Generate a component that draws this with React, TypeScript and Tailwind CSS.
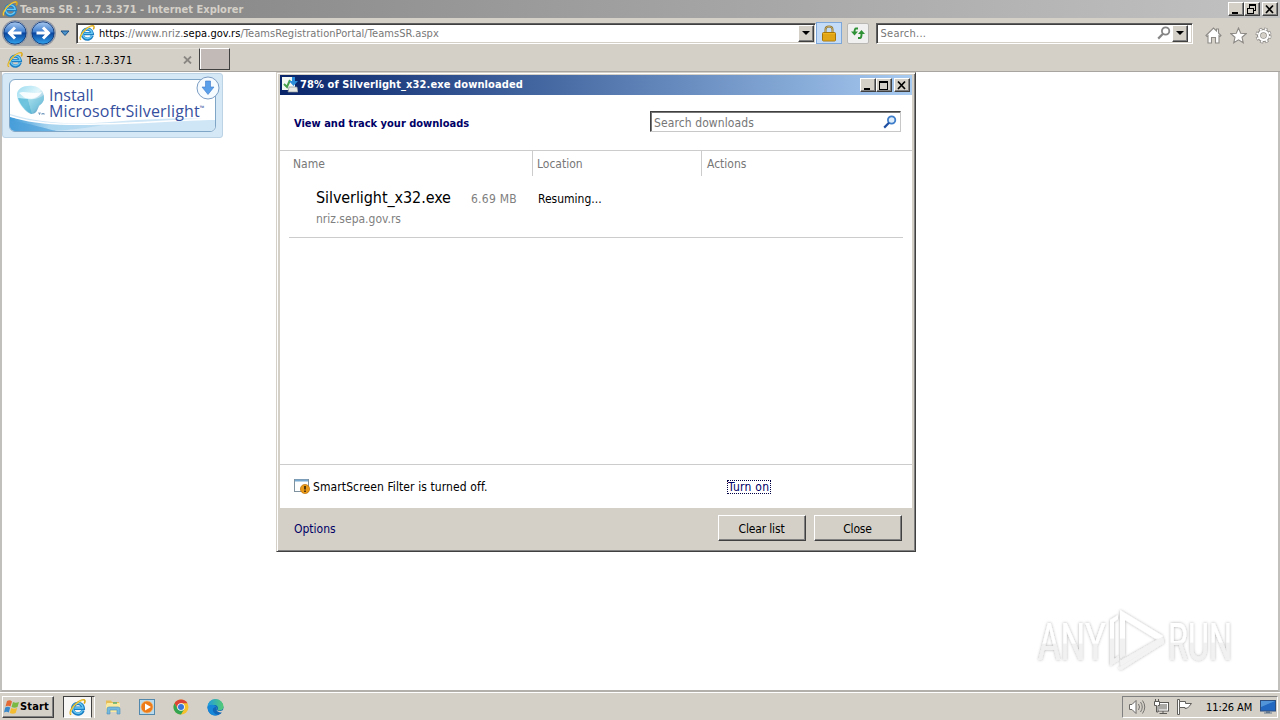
import type { ReactNode } from "react";

const ui = "font-['DejaVu_Sans_Condensed','DejaVu_Sans',sans-serif] whitespace-nowrap";

const raised =
  "bg-[#d4d0c8] border border-t-white border-l-white border-r-[#404040] border-b-[#404040] shadow-[inset_-1px_-1px_0_#808080]";

function IELogo({ size = 16 }: { size?: number }) {
  return (
    <svg width={size} height={size} viewBox="0 0 16 16" fill="none" className="shrink-0">
      <path d="M13.2 10.600A5 5 0 1 1 13.400 8.700H5" stroke="#1c7fc4" strokeWidth="3.200" />
      <path d="M12.800 10.600A4.800 4.800 0 1 1 13.200 8.400H5" stroke="#69c8f3" strokeWidth="1.400" />
      <path d="M1.800 14.800C.2 13 2 8.500 6.200 4.700C10 1.200 14.200-.2 14.900 1.500C15.200 2.400 14.800 3.500 14.300 4.300" stroke="#d9a514" strokeWidth="1.500" />
      <path d="M1.700 14.200C.9 12.300 3 8.300 6.500 5C10 1.800 13.600.5 14.300 1.600" stroke="#ffe36a" strokeWidth=".8" />
    </svg>
  );
}

function NavButton({ flip = false }: { flip?: boolean }) {
  return (
    <svg width="26" height="26" viewBox="0 0 26 26" className={flip ? "-scale-x-100" : ""}>
      <defs>
        <linearGradient id="nav" x1="0" y1="0" x2="0" y2="1">
          <stop offset="0" stopColor="#a9c8ee" />
          <stop offset=".45" stopColor="#3f7fd0" />
          <stop offset=".5" stopColor="#0a459f" />
          <stop offset="1" stopColor="#33a4ee" />
        </linearGradient>
      </defs>
      <circle cx="13" cy="13" r="12.300" fill="#d8dde6" stroke="#77808f" strokeWidth=".8" />
      <circle cx="13" cy="13" r="11.200" fill="url(#nav)" stroke="#12356f" strokeWidth=".9" />
      <path d="M19.500 13H8M13 7.500L7.500 13L13 18.500" stroke="#fff" strokeWidth="3" fill="none" />
    </svg>
  );
}

function DownArrow() {
  return (
    <svg width="8" height="4" viewBox="0 0 8 4">
      <path d="M0 0H8L4 4Z" fill="#000" />
    </svg>
  );
}

function CaptionButton({ children }: { children: ReactNode }) {
  return (
    <div className={`${raised} flex h-[14px] w-4 items-center justify-center`}>
      <svg width="12" height="11" viewBox="0 0 12 11" fill="none" stroke="#000" shapeRendering="crispEdges">
        {children}
      </svg>
    </div>
  );
}

const minimizeGlyph = <path d="M2 9H8" strokeWidth="2" />;
const maximizeGlyph = <path d="M1.500 1V9.500H9.500V1M1 1.500H10M1 2.500H10" />;
const restoreGlyph = <path d="M3.500 4V1.500H9.500V6.500H8M3 .9H10M1.500 4.500H7.500V9.500H1.500ZM1 4H8" />;
const closeGlyph = <path d="M2 1.500L9 9M9 1.500L2 9" strokeWidth="1.700" shapeRendering="auto" />;

function Magnifier({ blue = false }: { blue?: boolean }) {
  return (
    <svg width="14" height="14" viewBox="0 0 14 14" fill="none">
      <circle cx="8.600" cy="5" r="3.700" stroke={blue ? "#3d7cc9" : "#858585"} strokeWidth="1.800" fill={blue ? "#dcecfb" : "#fff"} />
      <path d="M6 7.800L1.200 12.600" stroke={blue ? "#1f4fa0" : "#858585"} strokeWidth="2.200" />
    </svg>
  );
}

function SilverlightBadge() {
  return (
    <div className="relative h-[65px] w-[221px] rounded-[3px] border border-[#bcd3e6] bg-[#d5e8f6] p-[6px] pt-[5px]">
      <div className="relative flex h-[53px] w-[207px] items-center overflow-hidden rounded-md border border-[#7fa6c6] bg-white">
        <svg className="absolute inset-0" width="205" height="51" viewBox="0 0 205 51">
          <defs>
            <linearGradient id="wave" x1="0" y1="0" x2="1" y2="0">
              <stop offset="0" stopColor="#3d9ad8" />
              <stop offset=".35" stopColor="#a8d5f0" />
              <stop offset="1" stopColor="#c3dff2" />
            </linearGradient>
            <linearGradient id="gem" x1="0" y1="0" x2="1" y2="1">
              <stop offset="0" stopColor="#9bdcf0" />
              <stop offset=".5" stopColor="#e2f6fb" />
              <stop offset="1" stopColor="#2585b5" />
            </linearGradient>
          </defs>
          <path d="M0 34C30 43 60 45 100 42C140 39 175 37 205 40V51H0Z" fill="#cfe6f6" />
          <path d="M0 37C30 44 60 46 110 42C75 49 55 50 45 51H0Z" fill="url(#wave)" />
          <path d="M0 36C40 50 100 43 205 39" fill="none" stroke="#fff" strokeWidth="1.500" />
          <path d="M0 40C25 45 38 49 46 51H0Z" fill="#4b9fda" opacity=".7" />
          <path d="M7 16C6 8 15 5 23 6C31 7 34 12 34 18C34 22 31 24 29 26C27 31 26 34 21 34C15 32 8 24 7 16Z" fill="url(#gem)" />
          <path d="M9 13C14 10 22 15 32 12C28 19 21 19 15 18Z" fill="#fff" opacity=".85" />
          <path d="M8 18L18 19L22 34C15 31 10 25 8 18Z" fill="#4bb4d4" opacity=".75" />
          <path d="M18 19C24 20 30 18 34 15C34 22 32 24 29 25L22 34Z" fill="#75c7df" opacity=".65" />
          <path d="M28 33H31M29.500 33V35M32 35V33L33 34L34 33V35" stroke="#467ba8" strokeWidth=".6" fill="none" />
        </svg>
        <div className="relative -mt-[6px] ml-[39px] whitespace-nowrap font-['Open_Sans',sans-serif] text-[16px] leading-4 text-[#364f9e]">
          <div>Install</div>
          <div className="flex tracking-[0.16px]">
            Microsoft<span className="text-[7px] leading-[12px]">●</span>Silverlight<span className="text-[6px] leading-[11px]">™</span>
          </div>
        </div>
      </div>
      <svg className="absolute left-[193px] top-[2px]" width="24" height="24" viewBox="0 0 24 24">
        <circle cx="12" cy="12" r="11" fill="#f6fbff" stroke="#7c9dc4" />
        <path d="M9.500 5H14.500V11H18L12 18.500L6 11H9.500Z" fill="#5a9fe9" stroke="#3d7bcb" strokeWidth=".6" />
      </svg>
    </div>
  );
}

function TitleBar() {
  return (
    <div className="flex h-[18px] items-center bg-linear-to-r from-[#808080] to-[#c2c2c2] pl-[2px] pr-[2px]">
      <IELogo />
      <span className={`${ui} ml-[2px] flex-1 pt-px text-[11px] font-bold leading-[14px] text-[#d4d0c8]`}>
        Teams SR : 1.7.3.371 - Internet Explorer
      </span>
      <div className="flex">
        <CaptionButton>{minimizeGlyph}</CaptionButton>
        <CaptionButton>{restoreGlyph}</CaptionButton>
        <div className="w-[2px]" />
        <CaptionButton>{closeGlyph}</CaptionButton>
      </div>
    </div>
  );
}

const sunken = "border border-t-[#606060] border-l-[#606060] border-r-white border-b-white shadow-[inset_1px_1px_0_#404040,inset_-1px_-1px_0_#d4d0c8] bg-white";

function AddressBar() {
  return (
    <div className="flex h-[30px] items-center pl-[2px] pr-[8px]">
      <div className="flex gap-[2px] rounded-full bg-[#a9aaac]">
        <NavButton />
        <NavButton flip />
      </div>
      <svg className="ml-1 mr-[6px]" width="10" height="7" viewBox="0 0 10 7">
        <path d="M1 1H9L5 5.500Z" fill="#4d94cc" stroke="#174f86" />
      </svg>
      <div className={`${sunken} flex h-[21px] w-[741px] items-center pl-[2px] pr-px`}>
        <IELogo />
        <span className={`${ui} ml-1 flex-1 pt-[2px] text-[11px] tracking-[0.06px] text-[#777]`}>
          <span className="text-black">https</span>://www.nriz.<span className="text-black">sepa.gov.rs</span>/TeamsRegistrationPortal/TeamsSR.aspx
        </span>
        <div className={`${raised} flex h-[17px] w-4 items-center justify-center`}>
          <DownArrow />
        </div>
      </div>
      <div className="flex h-[22px] w-[26px] items-center justify-center border border-[#7da7d9] bg-[#c5dcf8]">
        <svg width="14" height="17" viewBox="0 0 14 17">
          <path d="M3.500 8V4.500C3.500 .5 10.500 .5 10.500 4.500V8" fill="none" stroke="#8f7430" strokeWidth="2" />
          <path d="M3.500 8V4.500C3.500 .5 10.500 .5 10.500 4.500V8" fill="none" stroke="#d9c27c" strokeWidth=".7" />
          <rect x=".5" y="7.500" width="13" height="8.500" rx="1" fill="#f0b51d" stroke="#a5750c" />
          <path d="M1 10H13M1 12H13M1 14H13" stroke="#c98d10" strokeWidth=".8" />
        </svg>
      </div>
      <div className="ml-[5px] flex h-[21px] w-[22px] items-center justify-center rounded-[2px] border border-[#bab8b5] bg-[#f0f0f0]">
        <svg width="16" height="14" viewBox="0 0 16 14" fill="none" stroke="#2f9136" strokeWidth="2">
          <path d="M8 2.500H6Q4.500 2.500 4.500 7" />
          <path d="M1 5.500H8L4.500 9.500Z" fill="#2f9136" stroke="none" />
          <path d="M8 12H10Q11.500 12 11.500 8" />
          <path d="M8 8H15L11.500 4Z" fill="#2f9136" stroke="none" />
        </svg>
      </div>
      <div className={`${sunken} ml-[7px] flex h-[21px] w-[318px] items-center pl-1 pr-1`}>
        <span className={`${ui} flex-1 pt-[2px] text-[11px] tracking-[0.25px] text-[#777]`}>Search...</span>
        <Magnifier />
        <div className={`${raised} ml-px flex h-[17px] w-4 items-center justify-center`}>
          <DownArrow />
        </div>
      </div>
      <div className="ml-3 flex gap-2 pt-[4px]">
        <svg width="17" height="17" viewBox="0 0 17 17" fill="#fff" stroke="#8d8a86" strokeWidth="1.100">
          <path d="M1 8.500L8.500 1L11.500 4V2H13.500V6L16 8.500L15 9.500L14 8.700V16H10.500V10.500H6.500V16H3V8.700L2 9.500Z" />
        </svg>
        <svg width="17" height="17" viewBox="0 0 17 17" fill="#fff" stroke="#8d8a86" strokeWidth="1.100">
          <path d="M8.500 1L10.700 6.200L16.200 6.600L12 10.300L13.300 15.800L8.500 12.900L3.700 15.800L5 10.300L.8 6.600L6.300 6.200Z" />
        </svg>
        <svg width="17" height="17" viewBox="0 0 17 17">
          <circle cx="8.500" cy="8.500" r="6.400" fill="none" stroke="#8d8a86" strokeWidth="3.200" strokeDasharray="3 2.026" />
          <circle cx="8.500" cy="8.500" r="4.600" fill="none" stroke="#8d8a86" strokeWidth="4" />
          <circle cx="8.500" cy="8.500" r="6.400" fill="none" stroke="#fff" strokeWidth="2" strokeDasharray="1.800 3.226" strokeDashoffset="-.6" />
          <circle cx="8.500" cy="8.500" r="4.400" fill="none" stroke="#fff" strokeWidth="2.200" />
          <circle cx="8.500" cy="8.500" r="2.200" fill="#d4d0c8" />
        </svg>
      </div>
    </div>
  );
}

function TabStrip() {
  return (
    <div className="flex h-6 items-start border-b border-[#a8a5a0]">
      <div className="flex h-[23px] w-[199px] items-center border-t border-[#e4e1da] pl-[7px] pr-[7px]">
        <IELogo />
        <span className={`${ui} ml-1 flex-1 pt-[2px] text-[11px] tracking-[0.05px] text-black`}>Teams SR : 1.7.3.371</span>
        <svg width="9" height="8" viewBox="0 0 9 8">
          <path d="M1 .5L8 7.500M8 .5L1 7.500" stroke="#8a8782" strokeWidth="1.800" />
        </svg>
      </div>
      <div className="h-[22px] w-[31px] border border-b-[#404040] border-l-[#404040] border-r-[#404040] border-t-white bg-[#c1bab6] shadow-[inset_1px_0_0_#fff]" />
    </div>
  );
}

function DialogButton({ children }: { children: ReactNode }) {
  return (
    <button className={`${raised} ${ui} h-[26px] w-[88px] pr-px pt-[2px] text-[12px] tracking-[-0.15px] text-black`}>
      {children}
    </button>
  );
}

function DownloadsDialog() {
  return (
    <div className="absolute left-[276px] top-[72px] flex h-[480px] w-[640px] flex-col border border-b-[#404040] border-l-[#d4d0c8] border-r-[#404040] border-t-[#d4d0c8] bg-[#d4d0c8] p-[2px] pr-[3px] pl-[3px] shadow-[inset_1px_1px_0_#fff,inset_-1px_-1px_0_#808080]">
      <div className="flex h-5 shrink-0 items-center bg-linear-to-r from-[#0a246a] to-[#a6caf0] pl-[2px] pr-[2px]">
        <svg width="16" height="16" viewBox="0 0 16 16">
          <rect x="0" y="0" width="13" height="13" fill="#f4f8f4" />
          <path d="M2 7L5 10L8 3" stroke="#46a04d" strokeWidth="2" fill="none" />
          <path d="M10 0H13V4H16L11.500 9L7 4H10Z" fill="#2c8edb" />
          <path d="M7 10H15L16 15H6Z" fill="#e8e8e4" stroke="#8b9598" strokeWidth=".7" />
        </svg>
        <span className={`${ui} ml-[2px] flex-1 pt-px text-[11px] font-bold tracking-[0.1px] text-white`}>
          78% of Silverlight_x32.exe downloaded
        </span>
        <div className="flex">
          <CaptionButton>{minimizeGlyph}</CaptionButton>
          <CaptionButton>{maximizeGlyph}</CaptionButton>
          <div className="w-[2px]" />
          <CaptionButton>{closeGlyph}</CaptionButton>
        </div>
      </div>
      <div className="flex h-[413px] flex-col bg-white">
        <div className="flex h-14 items-center justify-between border-b border-[#cccccc] pl-[14px] pr-[11px]">
          <span className={`${ui} pt-[3px] text-[11px] font-bold text-[#000066]`}>View and track your downloads</span>
          <div className="mb-[2px] flex h-[21px] w-[251px] items-center justify-between border border-b-[#c8c8c8] border-l-[#404040] border-r-[#c8c8c8] border-t-[#404040] pl-[3px] pr-[3px] shadow-[inset_1px_1px_0_#777]">
            <span className={`${ui} pt-[2px] text-[12px] tracking-[0.1px] text-[#767676]`}>Search downloads</span>
            <Magnifier blue />
          </div>
        </div>
        <div className={`${ui} flex h-[25px] text-[12px] leading-[27px] text-[#777]`}>
          <div className="w-[252px] pl-[13px]">Name</div>
          <div className="w-[169px] border-l border-[#cccccc] pl-1">Location</div>
          <div className="border-l border-[#cccccc] pl-[5px]">Actions</div>
        </div>
        <div className={`${ui} mx-[9px] flex h-[62px] border-b border-[#cccccc] text-[12px] text-[#808080]`}>
          <div className="w-[182px] pl-[27px] pt-3">
            <div className="text-[16px] leading-5 tracking-[-0.08px] text-black">Silverlight_x32.exe</div>
            <div className="mt-[3px] leading-4">nriz.sepa.gov.rs</div>
          </div>
          <div className="w-[67px] pt-[15px] leading-4 tracking-[0.25px]">6.69 MB</div>
          <div className="pt-[15px] leading-4 text-black">Resuming...</div>
        </div>
        <div className="flex-1" />
        <div className={`${ui} flex h-11 items-center border-t border-[#cccccc] pl-[14px] text-[12px] text-black`}>
          <svg width="17" height="17" viewBox="0 0 17 17">
            <rect x=".5" y="1.500" width="14" height="12" fill="#fff" stroke="#7e929f" />
            <path d="M1 2.500H14" stroke="#78a9d1" strokeWidth="2" />
            <circle cx="11" cy="11" r="4.600" fill="#e99a19" stroke="#bb710b" strokeWidth=".7" />
            <path d="M11 8V11.500M11 12.500V14" stroke="#2d2108" strokeWidth="1.600" />
          </svg>
          <span className="ml-[2px] w-[414px] tracking-[0.1px]">SmartScreen Filter is turned off.</span>
          <a className="h-[14px] w-[44px] border border-dotted border-[#000044] leading-[13px] tracking-[0.25px] text-[#000066]">Turn on</a>
        </div>
      </div>
      <div className="flex flex-1 items-center pl-[14px] pr-[10px]">
        <span className={`${ui} flex-1 text-[12px] text-[#000066]`}>Options</span>
        <div className="mb-[2px] flex gap-2">
          <DialogButton>Clear list</DialogButton>
          <DialogButton>Close</DialogButton>
        </div>
      </div>
    </div>
  );
}

function Watermark() {
  return (
    <svg className="absolute left-[1022px] top-[594px]" width="230" height="94" viewBox="-8 -8 230 94">
      <defs>
        <linearGradient id="markText" x1="0" y1="0" x2="0" y2="1">
          <stop offset=".5" stopColor="#fff" />
          <stop offset=".52" stopColor="#f1f1f1" />
        </linearGradient>
        <filter id="markShadow" x="-10%" y="-10%" width="120%" height="120%">
          <feDropShadow dx="0" dy="0" stdDeviation="1.800" floodColor="#000" floodOpacity=".32" />
        </filter>
      </defs>
      <g filter="url(#markShadow)" fill="url(#markText)" className="font-['Roboto',sans-serif] text-[51px]">
        <text transform="translate(8 58) scale(.68 1)">ANY</text>
        <text transform="translate(138 58) scale(.635 1)">RUN</text>
        <path d="M80 18L88 13V17L84 20V57L89 54V58L80 64ZM90 8L133 34L129 39L95 18V53L90 56Z" />
        <path d="M90 59L132 35L134 38V41L91 68L88 66L127 42L91 64Z" fill="#f3f3f3" />
      </g>
    </svg>
  );
}

function Taskbar() {
  return (
    <div className="flex h-[28px] items-center border-t border-white bg-[#d4d0c8] pl-[2px] pr-[2px] pt-px">
      <button className={`${raised} ${ui} flex h-[22px] w-[52px] items-center pl-px text-[11px] font-bold text-black`}>
        <svg width="16" height="16" viewBox="0 0 16 16" className="shrink-0">
          <path d="M3 2Q6 .5 8 2.500L6.500 7.500Q4 6 1.500 7.500Z" fill="#e36a35" />
          <path d="M9 3Q11.500 4.500 15 3L13.500 8Q10.500 9.500 7.500 8Z" fill="#79b944" />
          <path d="M1.200 8.500Q4 7 6.200 8.500L4.800 13.500Q2.500 12 0 13.500Z" fill="#3989ca" />
          <path d="M7.200 9Q10 10.500 13.200 9L11.700 14Q9 15.500 5.800 14Z" fill="#f4bd31" />
        </svg>
        <span className="pt-px tracking-[0.15px]">Start</span>
      </button>
      <div className="ml-[9px] flex h-[22px] w-[29px] items-center justify-center border border-b-white border-l-[#404040] border-r-[#404040] border-t-[#404040] bg-[#f8f7f5]">
        <IELogo size={17} />
      </div>
      <div className="h-[22px] w-[3px] border-r border-t border-r-white border-t-[#404040] bg-[#d4d0c8]" />
      <div className="ml-[10px] flex items-center gap-[18px]">
        <svg width="16" height="16" viewBox="0 0 16 16">
          <path d="M1 1.500H6L7 3H14V13H1Z" fill="#e7bd58" />
          <path d="M2 4H15V13H1V6Z" fill="#faeaa0" />
          <path d="M2 15V10Q2 8 4 8H13Q15 8 15 10V15H12V11H5V15Z" fill="#75b9df" stroke="#4b8fb8" strokeWidth=".6" />
          <path d="M8 4H12" stroke="#5ab074" strokeWidth="1.500" />
        </svg>
        <svg width="16" height="16" viewBox="0 0 16 16">
          <rect x=".5" y=".5" width="15" height="15" fill="#b9d9ed" stroke="#5388ad" />
          <circle cx="8" cy="8" r="6" fill="#ee7b19" stroke="#f8b76a" strokeWidth=".7" />
          <path d="M6 4.500L12 8L6 11.500Z" fill="#fff" />
        </svg>
        <svg width="16" height="16" viewBox="0 0 16 16">
          <circle cx="8" cy="8" r="7.500" fill="#f5c22e" />
          <path d="M1.500 4.250A7.500 7.500 0 0 1 14.500 4.250H8L4.750 9.900Z" fill="#db4336" />
          <path d="M1.500 4.250A7.500 7.500 0 0 0 8 15.500L11.250 9.900H4.750Z" fill="#33a552" />
          <circle cx="8" cy="8" r="3.800" fill="#fff" />
          <circle cx="8" cy="8" r="3" fill="#3976d8" />
        </svg>
        <svg width="17" height="17" viewBox="0 0 17 17">
          <defs>
            <linearGradient id="edgeTop" x1="0" y1="0" x2="1" y2="0">
              <stop offset="0" stopColor="#209be0" />
              <stop offset="1" stopColor="#55cc73" />
            </linearGradient>
          </defs>
          <circle cx="8.500" cy="8.500" r="8" fill="#1166b8" />
          <path d="M.5 8A8 8 0 0 1 16.500 8C16.500 11 13 12 10.500 11C12 8 10 6 7 6C4 6 1.500 7 .5 8Z" fill="url(#edgeTop)" />
          <path d="M.5 8C2 5 8 5 9 8C6 8 5 11 6.500 13C7.500 15 10 16 12 15.500C5 19 .5 13 .5 8Z" fill="#1687d8" />
          <path d="M9.500 8C8.500 9.500 9 11 10.500 11.500C13 12.500 15 12 16.500 10.500V13.500C12 14 8 12 9.500 8Z" fill="#d4d0c8" />
        </svg>
      </div>
      <div className="flex-1" />
      <div className="flex h-[22px] w-[156px] items-center border border-b-white border-l-[#808080] border-r-white border-t-[#808080] pl-[5px] pr-px">
        <svg width="18" height="16" viewBox="0 0 18 16" fill="none" stroke="#6b6966">
          <path d="M1.500 5.500H4L8 1.500V14.500L4 10.500H1.500Z" fill="#fff" />
          <path d="M10.500 5Q12.500 8 10.500 11M12.500 3Q16 8 12.500 13M14.500 1.500Q19 8 14.500 14.500" strokeWidth=".9" />
        </svg>
        <svg className="ml-[7px]" width="17" height="16" viewBox="0 0 17 16" fill="none" stroke="#5b5956">
          <rect x="4.500" y="3.500" width="11" height="8.500" fill="#aaa9a6" />
          <rect x="5.500" y="4.500" width="9" height="6.500" stroke="#fff" />
          <path d="M10 12V14.500M6.500 14.500H14" />
          <path d="M1.500 2.500H6.500V6.500H5V13H3.500V6.500H1.500ZM2.500 0V2.500M5.500 0V2.500" fill="#fff" />
        </svg>
        <svg className="ml-[6px]" width="17" height="16" viewBox="0 0 17 16" fill="#fff" stroke="#62605d">
          <path d="M1.500 .5H3.500V15.500H1.500Z" />
          <path d="M3.500 2.500H9.500V4.500H15.500L13 7.500Q12 9.500 9 9.500V8.500H3.500Z" />
        </svg>
        <span className={`${ui} ml-[13px] flex-1 pt-[2px] text-[11px] tracking-[-0.1px] text-black`}>11:26 AM</span>
        <svg width="16" height="14" viewBox="0 0 16 14">
          <rect x=".5" y=".5" width="15" height="10.500" fill="#2469c1" stroke="#2c4f7f" />
          <path d="M1 1H15L1 7Z" fill="#67a9e3" opacity=".7" />
          <path d="M6 11H10V12.500H12V13.500H4V12.500H6Z" fill="#63788c" />
        </svg>
      </div>
    </div>
  );
}

export default function App() {
  return (
    <div className="relative flex h-[720px] w-[1280px] flex-col overflow-hidden bg-[#d4d0c8]">
      <TitleBar />
      <AddressBar />
      <TabStrip />
      <main className="h-[620px] border-b-[2px] border-l-2 border-r-2 border-b-[#b3b0ac] border-l-[#c2c0bd] border-r-[#c2c0bd] bg-white pt-px">
        <SilverlightBadge />
      </main>
      <Taskbar />
      <Watermark />
      <DownloadsDialog />
    </div>
  );
}
